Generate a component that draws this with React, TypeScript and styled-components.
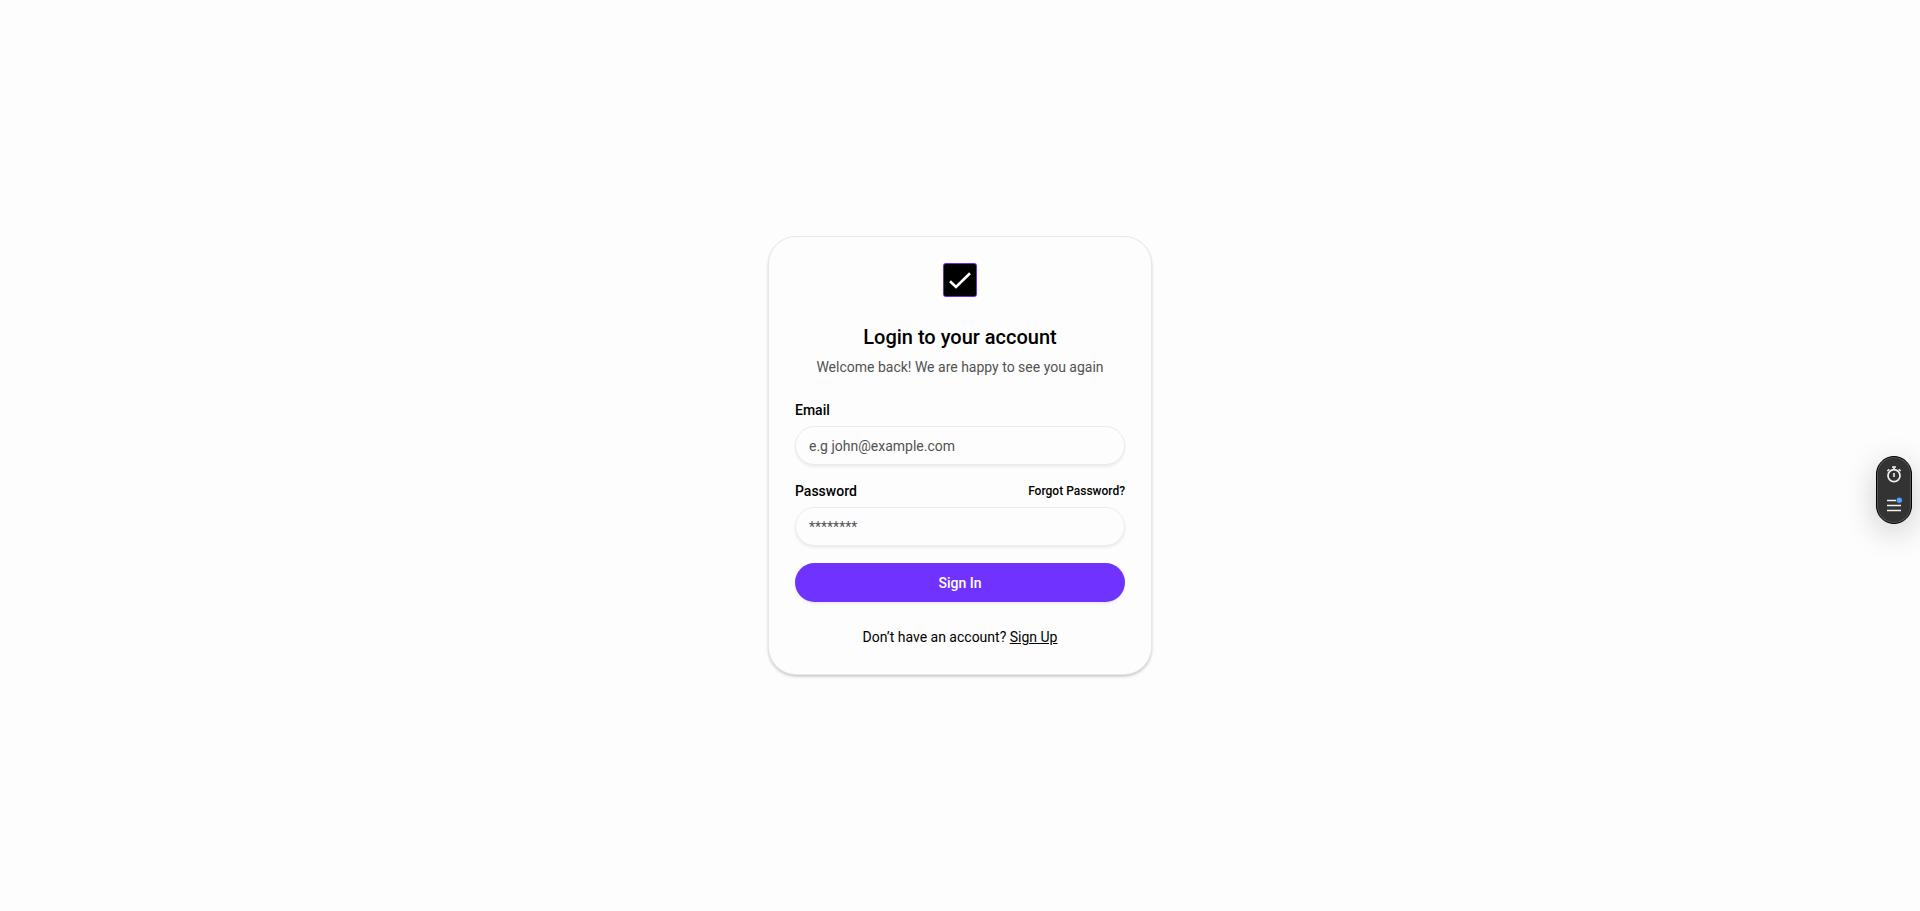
import React from "react";
import styled, { createGlobalStyle } from "styled-components";

const GlobalStyle = createGlobalStyle`
  *, *::before, *::after { box-sizing: border-box; }
  body {
    margin: 0;
    background: #fdfdfd;
    color: #000;
    font-family: Roboto, "Liberation Sans", sans-serif;
    font-size: 14px;
    line-height: 20px;
  }
`;

const Page = styled.main`
  min-height: 100vh;
  display: flex;
  align-items: center;
  justify-content: center;
`;

const Card = styled.section`
  width: 100%;
  max-width: 384px;
  padding: 26px;
  display: flex;
  flex-direction: column;
  gap: 24px;
  border: 1px solid #e7e7ee;
  border-radius: 28px;
  background: #fdfdfd;
  box-shadow: 0 2px 3px rgba(0, 0, 0, 0.16), 0 1px 2px -1px rgba(0, 0, 0, 0.16);
`;

const Header = styled.header`
  display: flex;
  flex-direction: column;
  align-items: center;
  gap: 6px;
  text-align: center;
`;

const Logo = styled.svg`
  display: block;
  margin-bottom: 20px;
`;

const Title = styled.h1`
  margin: 0;
  font-size: 20px;
  line-height: 28px;
  font-weight: 500;
`;

const Subtitle = styled.p`
  margin: 0;
  color: #525252;
`;

const Form = styled.form`
  display: flex;
  flex-direction: column;
  gap: 17px;
`;

const Field = styled.div`
  display: flex;
  flex-direction: column;
  gap: 7px;
  line-height: 18px;
`;

const LabelRow = styled.div`
  display: flex;
  align-items: center;
  justify-content: space-between;
`;

const Label = styled.label`
  font-weight: 500;
`;

const ForgotLink = styled.a`
  color: inherit;
  font-size: 12px;
  font-weight: 500;
  text-decoration: none;
`;

const Input = styled.input`
  width: 100%;
  height: 39px;
  padding: 0 13px;
  border: 1px solid #ebebeb;
  border-radius: 20px;
  background: #fdfdfd;
  color: #000;
  font: inherit;
  box-shadow: 0 2px 3px rgba(0, 0, 0, 0.07);
  &::placeholder { color: #525252; opacity: 1; }
`;

const SubmitButton = styled.button`
  height: 39px;
  border: 0;
  border-radius: 20px;
  background: #7033ff;
  color: #fff;
  font: inherit;
  font-weight: 500;
  cursor: pointer;
  box-shadow: 0 2px 3px rgba(0, 0, 0, 0.07);
`;

const Footer = styled.p`
  margin: 0;
  line-height: 22px;
  text-align: center;
`;

const SignUpLink = styled.a`
  color: inherit;
  text-decoration: underline;
`;

const Dock = styled.aside`
  position: fixed;
  right: 8px;
  top: 50%;
  width: 36px;
  height: 68px;
  padding: 9px 0 11px;
  display: flex;
  flex-direction: column;
  align-items: center;
  justify-content: space-between;
  border: 1px solid #000;
  border-radius: 18px;
  background: #333;
  box-shadow: inset 0 0 0 1px #555, 0 8px 32px rgba(0, 0, 0, 0.2);
`;

const DockButton = styled.button`
  display: block;
  padding: 0;
  border: 0;
  background: none;
  cursor: pointer;
  svg { display: block; }
`;

export default function App() {
  return (
    <>
      <GlobalStyle />
      <Page>
        <Card>
          <Header>
            <Logo width="34" height="34" viewBox="0 0 34 34" aria-hidden="true">
              <rect width="34" height="34" rx="3" fill="#6a2cf5" />
              <rect x="1" y="1" width="32" height="32" rx="1.5" fill="#000" />
              <path d="M7 18.3 L13 24 L27 10.2" fill="none" stroke="#fff" strokeWidth="2.6" />
            </Logo>
            <Title>Login to your account</Title>
            <Subtitle>Welcome back! We are happy to see you again</Subtitle>
          </Header>
          <Form onSubmit={(e: React.FormEvent) => e.preventDefault()}>
            <Field>
              <Label htmlFor="email">Email</Label>
              <Input id="email" type="email" placeholder="e.g john@example.com" />
            </Field>
            <Field>
              <LabelRow>
                <Label htmlFor="password">Password</Label>
                <ForgotLink href="#forgot">Forgot Password?</ForgotLink>
              </LabelRow>
              <Input id="password" type="password" placeholder="********" />
            </Field>
            <SubmitButton type="submit">Sign In</SubmitButton>
          </Form>
          <Footer>
            Don’t have an account? <SignUpLink href="#signup">Sign Up</SignUpLink>
          </Footer>
        </Card>
      </Page>
      <Dock>
        <DockButton type="button" aria-label="Timer">
          <svg width="16" height="17" viewBox="0 0 16 17" fill="none" stroke="#f2f2f2">
            <circle cx="8" cy="9.7" r="6" strokeWidth="1.7" />
            <path d="M6 1h4M8 1v2.5" strokeWidth="1.6" />
            <path d="M1.3 4.8l2-1.4M14.7 4.8l-2-1.4" strokeWidth="1.5" />
            <path d="M8 7v4" strokeWidth="1.6" />
          </svg>
        </DockButton>
        <DockButton type="button" aria-label="Menu">
          <svg width="16" height="15" viewBox="0 0 16 15">
            <path d="M1 3.5h9M1 8.5h14M1 13.5h14" stroke="#f2f2f2" strokeWidth="1.7" />
            <circle cx="13.3" cy="3.3" r="2.7" fill="#4ba3ff" />
          </svg>
        </DockButton>
      </Dock>
    </>
  );
}
